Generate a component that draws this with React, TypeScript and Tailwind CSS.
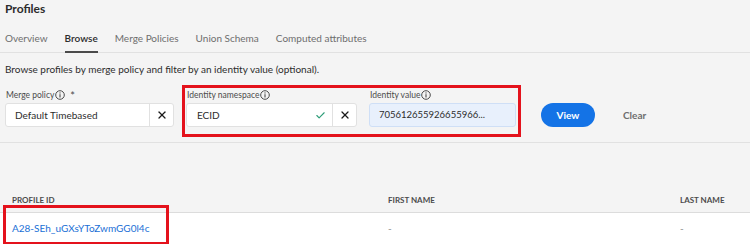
import { X, Check } from 'lucide-react'

function InfoIcon() {
  return (
    <svg width="10" height="10" viewBox="0 0 10 10" className="inline-block shrink-0">
      <circle cx="5" cy="5" r="4.3" fill="none" stroke="#4b4b4b" strokeWidth="1" />
      <rect x="4.45" y="4.2" width="1.1" height="3.3" fill="#4b4b4b" />
      <rect x="4.45" y="2.4" width="1.1" height="1.1" fill="#4b4b4b" />
    </svg>
  )
}

function FieldLabel({ text, star }: { text: string; star?: boolean }) {
  return (
    <div className="h-[14px] flex items-center gap-[1px] text-[8.5px] text-[#4b4b4b] leading-none pl-[1px]">
      <span>{text}</span>
      <InfoIcon />
      {star && <span className="ml-[4px] text-[11px] text-[#4b4b4b]">*</span>}
    </div>
  )
}

const tabs = ['Overview', 'Browse', 'Merge Policies', 'Union Schema', 'Computed attributes']

export default function App() {
  return (
    <div
      className="w-[750px] h-[244px] overflow-hidden bg-[#f4f4f4] text-[#2c2c2c] flex flex-col"
      style={{ fontFamily: 'Lato, "Open Sans", sans-serif' }}
    >
      {/* Title + tabs */}
      <div className="px-[5px] pt-[1px] text-[12px] font-bold leading-[16px]">Profiles</div>
      <div className="mt-[13px] flex gap-[17px] px-[5px] border-b border-[#e1e1e1] text-[10px] leading-[16px]">
        {tabs.map((t) => (
          <div
            key={t}
            className={
              t === 'Browse'
                ? 'pb-[5px] border-b-2 border-[#4b4b4b] text-[#2c2c2c] font-semibold -mb-px'
                : 'pb-[6px] text-[#6e6e6e]'
            }
          >
            {t}
          </div>
        ))}
      </div>
      <p className="px-[5px] mt-[9px] text-[10px] leading-[14px]">
        Browse profiles by merge policy and filter by an identity value (optional).
      </p>

      {/* Filter form */}
      <div className="mt-[9px] flex items-start px-[5px]">
        <div className="pt-[3px] w-[169px]">
          <FieldLabel text="Merge policy" star />
          <div className="mt-[1px] h-[24px] flex bg-white border border-[#e1e1e1] rounded-[3px]">
            <div className="flex-1 flex items-center pl-[9px] text-[10px]">Default Timebased</div>
            <div className="w-[24px] flex items-center justify-center border-l border-[#e1e1e1]">
              <X size={12} strokeWidth={2.6} color="#1b1b1b" />
            </div>
          </div>
        </div>

        <div className="ml-[8px] flex gap-[12px] border-[3px] border-[#e4121c] pl-[1px] pr-[2px] pb-[7px]">
          <div className="w-[171px]">
            <FieldLabel text="Identity namespace" />
            <div className="mt-[1px] h-[24px] flex bg-white border border-[#e1e1e1] rounded-[3px]">
              <div className="flex-1 flex items-center pl-[10px] text-[10px]">ECID</div>
              <div className="w-[24px] flex items-center justify-center">
                <Check size={11} strokeWidth={2.4} color="#2d9d78" />
              </div>
              <div className="w-[24px] flex items-center justify-center border-l border-[#e1e1e1]">
                <X size={12} strokeWidth={2.6} color="#1b1b1b" />
              </div>
            </div>
          </div>
          <div className="w-[147px]">
            <FieldLabel text="Identity value" />
            <div className="mt-[1px] h-[24px] flex items-center bg-[#e8f0fc] border border-[#cfdff6] rounded-[3px] pl-[9px] text-[9.5px]">
              705612655926655966...
            </div>
          </div>
        </div>

        <button className="ml-[20px] mt-[18px] h-[24px] w-[54px] rounded-full bg-[#1473e6] text-white text-[10px] font-bold">
          View
        </button>
        <button className="ml-[28px] mt-[18px] h-[24px] text-[10px] font-bold text-[#6e6e6e]">Clear</button>
      </div>

      {/* Table */}
      <div className="mt-[5px] border-t border-[#e1e1e1] relative flex-1 flex flex-col">
        <div className="mt-[52px] grid grid-cols-[376px_292px_1fr] pl-[12px] pb-[7px] border-b border-[#dcdcdc] text-[8px] font-bold text-[#4b4b4b] leading-[10px]">
          <div>PROFILE ID</div>
          <div>FIRST NAME</div>
          <div>LAST NAME</div>
        </div>
        <div className="flex-1 bg-white grid grid-cols-[376px_292px_1fr] pl-[12px] pt-[8px] text-[10px] leading-[14px]">
          <div className="text-[#1a6fd6]">A28-SEh_uGXsYToZwmGG0l4c</div>
          <div className="text-[#8e8e8e]">-</div>
          <div className="text-[#8e8e8e]">-</div>
        </div>
        <div className="absolute left-[3px] top-[62px] w-[166px] h-[40px] border-[3px] border-[#e4121c] pointer-events-none" />
      </div>
    </div>
  )
}
